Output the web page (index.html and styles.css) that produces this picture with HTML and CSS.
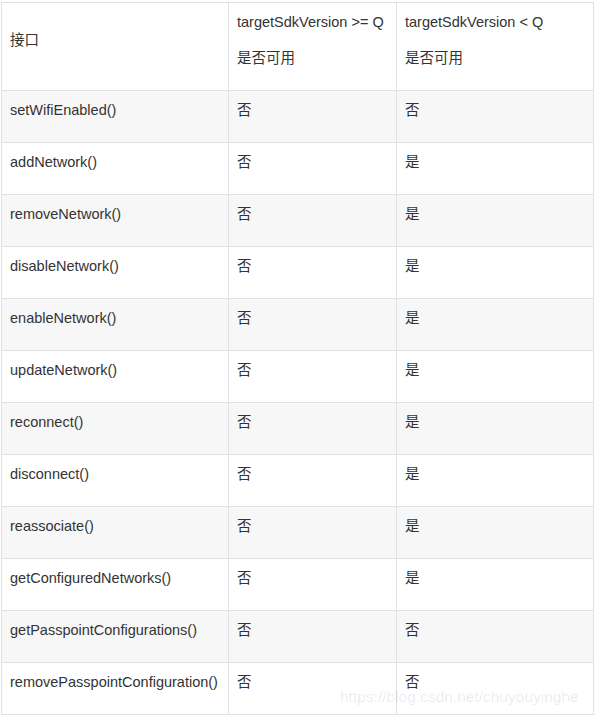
FILE: index.html
```html
<!DOCTYPE html>
<html lang="zh-CN">
<head>
<meta charset="utf-8">
<title>WifiManager API</title>
<link rel="stylesheet" href="styles.css">
</head>
<body>
<div class="page">
  <table class="api-table">
    <colgroup>
      <col class="c1"><col class="c2"><col class="c3">
    </colgroup>
    <thead>
      <tr>
        <th><p>接口</p></th>
        <th><p>targetSdkVersion &gt;= Q</p><p>是否可用</p></th>
        <th><p>targetSdkVersion &lt; Q</p><p>是否可用</p></th>
      </tr>
    </thead>
    <tbody>
      <tr><td><p>setWifiEnabled()</p></td><td><p>否</p></td><td><p>否</p></td></tr>
      <tr><td><p>addNetwork()</p></td><td><p>否</p></td><td><p>是</p></td></tr>
      <tr><td><p>removeNetwork()</p></td><td><p>否</p></td><td><p>是</p></td></tr>
      <tr><td><p>disableNetwork()</p></td><td><p>否</p></td><td><p>是</p></td></tr>
      <tr><td><p>enableNetwork()</p></td><td><p>否</p></td><td><p>是</p></td></tr>
      <tr><td><p>updateNetwork()</p></td><td><p>否</p></td><td><p>是</p></td></tr>
      <tr><td><p>reconnect()</p></td><td><p>否</p></td><td><p>是</p></td></tr>
      <tr><td><p>disconnect()</p></td><td><p>否</p></td><td><p>是</p></td></tr>
      <tr><td><p>reassociate()</p></td><td><p>否</p></td><td><p>是</p></td></tr>
      <tr><td><p>getConfiguredNetworks()</p></td><td><p>否</p></td><td><p>是</p></td></tr>
      <tr><td><p>getPasspointConfigurations()</p></td><td><p>否</p></td><td><p>否</p></td></tr>
      <tr><td><p>removePasspointConfiguration()</p></td><td><p>否</p></td><td><p>否</p></td></tr>
    </tbody>
  </table>
  <div class="watermark">https://blog.csdn.net/chuyouyinghe</div>
</div>
</body>
</html>
```
FILE: styles.css
```css
html, body {
  margin: 0;
  padding: 0;
  background: #ffffff;
}
body {
  font-family: "Liberation Sans", Arial, "Noto Sans CJK SC", sans-serif;
  font-size: 14.5px;
  line-height: 20px;
  color: #333333;
}
.page {
  position: relative;
  padding: 2px 0 0 1px;
  width: 592px;
}
.api-table {
  border-collapse: collapse;
  table-layout: fixed;
  width: 592px;
}
.c1 { width: 227px; }
.c2 { width: 168px; }
.c3 { width: 197px; }
.api-table th,
.api-table td {
  border: 1px solid #dfe2e5;
  padding: 9px 8px 6px 8px;
  vertical-align: middle;
  text-align: left;
  font-weight: normal;
  white-space: nowrap;
}
.api-table p {
  margin: 0 0 16px 0;
}
.api-table tbody tr:nth-child(odd) {
  background: #f7f7f7;
}
.watermark {
  position: absolute;
  left: 340px;
  top: 688px;
  font-size: 15.5px;
  line-height: 17px;
  color: rgba(0, 0, 0, 0.09);
}
```
